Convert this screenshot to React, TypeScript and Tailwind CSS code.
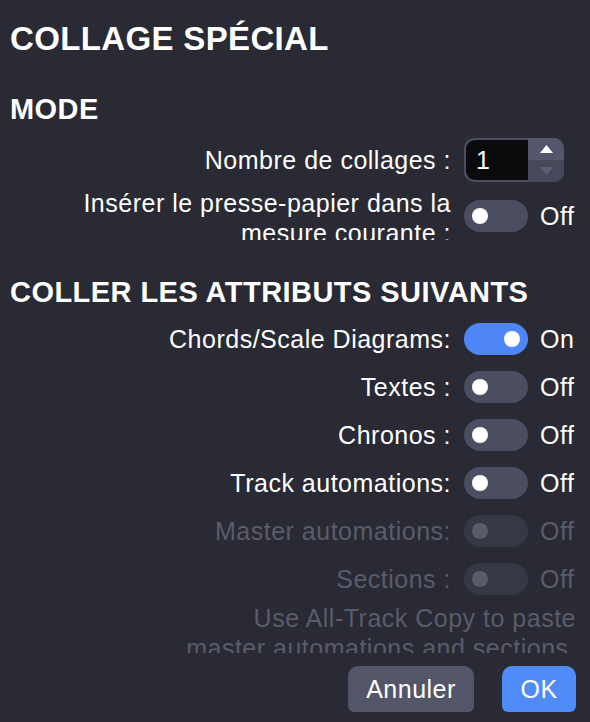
import React from "react";

type Row = { label: string; on: boolean; disabled?: boolean };

const rows: Row[] = [
  { label: "Chords/Scale Diagrams:", on: true },
  { label: "Textes :", on: false },
  { label: "Chronos :", on: false },
  { label: "Track automations:", on: false },
  { label: "Master automations:", on: false, disabled: true },
  { label: "Sections :", on: false, disabled: true }
];

function Toggle({ on, disabled }: { on: boolean; disabled?: boolean }) {
  const track = disabled ? "bg-[#363844]" : on ? "bg-[#4f86f7]" : "bg-[#4b4d61]";
  const knob = disabled ? "bg-[#5a5c6c]" : "bg-white";
  return (
    <div className={`flex h-8 w-16 items-center rounded-full px-2 ${track} ${on ? "justify-end" : "justify-start"}`}>
      <div className={`h-4 w-4 rounded-full ${knob}`} />
    </div>
  );
}

function ToggleRow({ label, on, disabled }: Row) {
  const text = disabled ? "text-[#5a5c6c]" : "text-white";
  return (
    <div className="flex h-12 items-center">
      <div className={`flex-1 pr-[13px] text-right ${text}`}>{label}</div>
      <div className="flex w-[112px] items-center">
        <Toggle on={on} disabled={disabled} />
        <span className={`ml-3 ${text}`}>{on ? "On" : "Off"}</span>
      </div>
    </div>
  );
}

export default function App() {
  return (
    <div
      className="h-[722px] w-[590px] overflow-hidden bg-[#292a33] pt-[19px] pr-[14px] pl-[10px] text-[25px] leading-[30px] tracking-[0.5px] text-white"
      style={{ fontFamily: '"Liberation Sans", Arial, sans-serif' }}
    >
      <h1 className="text-[33px] font-bold leading-[40px] tracking-[0.35px]">COLLAGE SPÉCIAL</h1>

      <h2 className="mt-8 text-[29px] font-bold leading-[36px] tracking-[0.45px]">MODE</h2>

      <div className="mt-[11px] flex h-11 items-center">
        <div className="flex-1 pr-[13px] text-right">Nombre de collages :</div>
        <div className="flex w-[112px]">
          <div className="flex h-11 w-[100px] overflow-hidden rounded-[10px] bg-[#4b4d61]">
            <div className="m-[2px] mr-0 flex flex-1 items-center rounded-l-[9px] bg-[#0b0b0d] pl-[10px]">1</div>
            <div className="flex w-[36px] flex-col">
              <div className="flex flex-1 items-center justify-center bg-[#54576c]">
                <svg width="13" height="8" viewBox="0 0 13 8">
                  <path d="M6.5 0 L13 8 L0 8 Z" fill="#ffffff" />
                </svg>
              </div>
              <div className="flex flex-1 items-center justify-center bg-[#46485b]">
                <svg width="13" height="8" viewBox="0 0 13 8">
                  <path d="M0 0 L13 0 L6.5 8 Z" fill="#5c5f73" />
                </svg>
              </div>
            </div>
          </div>
        </div>
      </div>

      <div className="mt-[10px] flex h-12 items-center">
        <div className="h-12 flex-1 overflow-hidden pr-[13px] text-right">
          <div className="-mt-1">
            Insérer le presse-papier dans la
            <br />
            mesure courante :
          </div>
        </div>
        <div className="flex w-[112px] items-center">
          <Toggle on={false} />
          <span className="ml-3">Off</span>
        </div>
      </div>

      <h2 className="mt-[34px] text-[29px] font-bold leading-[36px] tracking-[0.45px]">COLLER LES ATTRIBUTS SUIVANTS</h2>

      <div className="mt-[5px]">
        {rows.map((row) => (
          <ToggleRow key={row.label} {...row} />
        ))}
      </div>

      <div className="h-[50px] overflow-hidden text-right text-[#5a5c6c]">
        Use All-Track Copy to paste
        <br />
        master automations and sections.
      </div>

      <div className="mt-[13px] flex justify-end gap-7">
        <button className="h-[46px] w-[126px] rounded-t-[10px] rounded-b-md bg-[#535669] text-white">Annuler</button>
        <button className="h-[46px] w-[74px] rounded-t-[10px] rounded-b-md bg-[#4f8cf8] text-white">OK</button>
      </div>
    </div>
  );
}
